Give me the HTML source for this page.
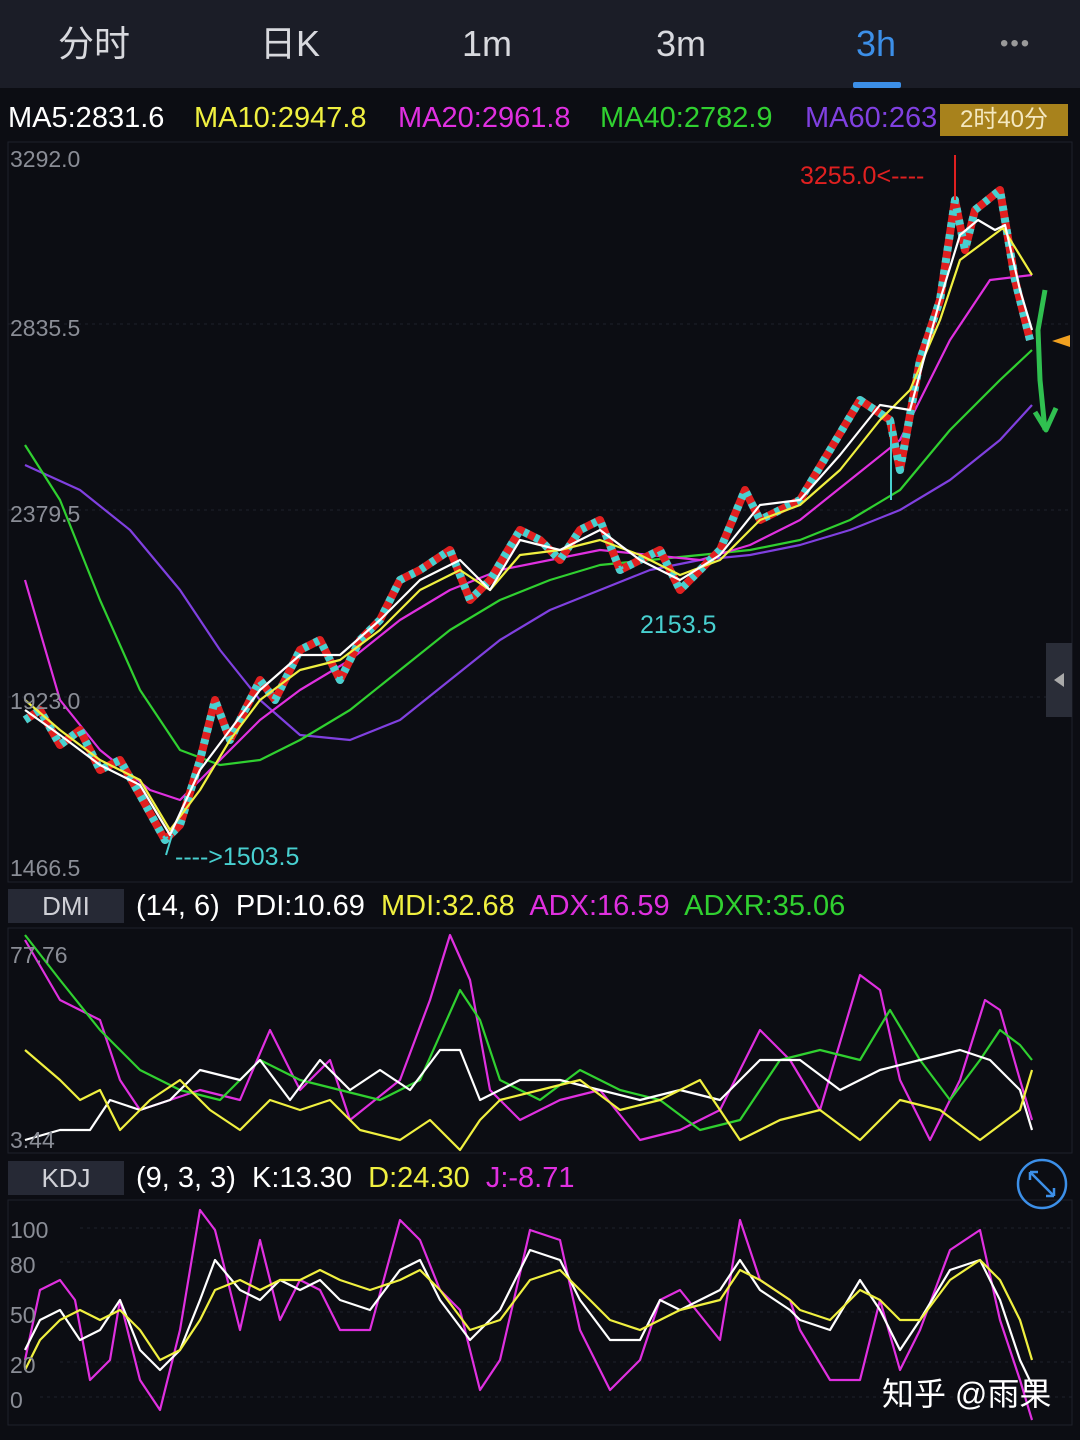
<!DOCTYPE html>
<html><head><meta charset="utf-8"><style>
body{margin:0;width:1080px;height:1440px;background:#0c0d13;overflow:hidden;font-family:"Liberation Sans","Noto Sans CJK SC",sans-serif;position:relative}
.hdr{position:absolute;left:0;top:0;width:1080px;height:88px;background:#1b1d27}
.tab{position:absolute;top:0;height:88px;line-height:88px;font-size:36px;color:#d8d9de}
.t{position:absolute;font-size:29px;white-space:nowrap;line-height:32px}
.box{position:absolute;left:8px;width:116px;height:34px;background:#262935;color:#cfd0d6;font-size:26px;text-align:center;line-height:34px}
</style></head><body>
<div class="hdr"></div>
<div class="tab" style="left:58px">分时</div>
<div class="tab" style="left:260px">日K</div>
<div class="tab" style="left:462px">1m</div>
<div class="tab" style="left:656px">3m</div>
<div class="tab" style="left:856px;color:#3c8fe8">3h</div>
<div class="tab" style="left:1000px;font-size:24px;letter-spacing:2px;color:#999">•••</div>
<div style="position:absolute;left:853px;top:82px;width:48px;height:6px;background:#3c8fe8;border-radius:2px"></div>
<div class="t" style="left:8px;top:102px;color:#fff">MA5:2831.6</div>
<div class="t" style="left:194px;top:102px;color:#f0f040">MA10:2947.8</div>
<div class="t" style="left:398px;top:102px;color:#e030e0">MA20:2961.8</div>
<div class="t" style="left:600px;top:102px;color:#30d030">MA40:2782.9</div>
<div class="t" style="left:805px;top:102px;color:#8040e0">MA60:263</div>
<div style="position:absolute;left:940px;top:104px;width:128px;height:32px;background:#a8821c;color:#f4e8c0;font-size:24px;line-height:32px;text-align:center">2时40分</div>
<svg style="position:absolute;left:0;top:0" width="1080" height="1440">
<g stroke="#1e212b" stroke-width="1" stroke-dasharray="3 4">
<line x1="8" y1="324" x2="1072" y2="324"/><line x1="8" y1="510" x2="1072" y2="510"/><line x1="8" y1="697" x2="1072" y2="697"/>
<line x1="80" y1="1228" x2="1072" y2="1228"/><line x1="60" y1="1262" x2="1072" y2="1262"/><line x1="60" y1="1312" x2="1072" y2="1312"/><line x1="60" y1="1362" x2="1072" y2="1362"/><line x1="40" y1="1397" x2="1072" y2="1397"/>
</g>
<g stroke="#1e212b" fill="none"><rect x="8" y="142" width="1064" height="740"/><rect x="8" y="928" width="1064" height="225"/><rect x="8" y="1200" width="1064" height="225"/></g>
<g fill="none" stroke-width="2.2" stroke-linejoin="round">
<polyline stroke="#8040e0" points="25,465 80,490 130,530 180,590 220,650 260,700 300,735 350,740 400,720 450,680 500,640 550,610 600,590 650,570 700,560 750,555 800,545 850,530 900,510 950,480 1000,440 1032,405"/>
<polyline stroke="#30d030" points="25,445 60,500 100,600 140,690 180,750 220,765 260,760 300,740 350,710 400,670 450,630 500,600 550,580 600,565 650,560 700,555 750,550 800,540 850,520 900,490 950,430 1000,380 1032,350"/>
<polyline stroke="#e030e0" points="25,580 60,700 100,750 150,790 180,800 220,760 260,720 300,690 350,660 400,620 450,590 500,570 550,560 600,550 650,555 700,560 750,545 800,520 850,480 900,440 950,340 990,280 1032,275"/>
<g stroke-width="8">
<polyline stroke="#e02020" points="25,720 40,710 60,745 80,730 100,770 120,760 140,795 165,840 180,825 200,760 215,700 230,740 260,680 275,700 300,650 320,640 340,680 360,640 380,620 400,580 420,570 450,550 470,600 490,580 520,530 540,540 560,560 580,530 600,520 620,570 640,560 660,550 680,590 700,570 720,550 745,490 760,520 800,500 830,450 860,400 890,420 900,470 920,360 940,300 955,200 965,250 975,210 1000,190 1015,280 1030,340"/>
<polyline stroke="#48d0d0" stroke-dasharray="5 7" points="25,720 40,710 60,745 80,730 100,770 120,760 140,795 165,840 180,825 200,760 215,700 230,740 260,680 275,700 300,650 320,640 340,680 360,640 380,620 400,580 420,570 450,550 470,600 490,580 520,530 540,540 560,560 580,530 600,520 620,570 640,560 660,550 680,590 700,570 720,550 745,490 760,520 800,500 830,450 860,400 890,420 900,470 920,360 940,300 955,200 965,250 975,210 1000,190 1015,280 1030,340"/>
</g>
<polyline stroke="#48d0d0" stroke-width="2" points="166,855 172,835"/>
<line x1="891" y1="420" x2="891" y2="500" stroke="#48d0d0" stroke-width="2"/>
<polyline stroke="#f0f040" points="25,700 60,730 100,760 140,780 170,830 200,790 230,740 260,700 300,670 340,660 380,630 420,590 460,570 490,590 520,555 560,550 600,540 640,555 680,575 720,560 760,520 800,505 840,470 880,420 910,390 940,320 960,260 1003,228 1032,275"/>
<polyline stroke="#ffffff" points="25,710 60,735 100,765 140,785 170,835 200,770 230,730 260,690 300,655 340,655 380,620 420,580 460,560 490,590 520,540 560,550 600,530 640,560 680,580 720,555 760,505 800,500 840,455 880,405 910,410 940,300 960,235 978,220 995,230 1005,225 1020,290 1032,330"/>
<polyline stroke="#30c050" stroke-width="5" points="1045,290 1038,330 1040,380 1045,430"/>
<polyline stroke="#30c050" stroke-width="5" points="1035,412 1046,430 1056,408"/>
<polygon fill="#f0a020" points="1052,341 1070,335 1070,347"/>
<line x1="955" y1="155" x2="955" y2="200" stroke="#e02020" stroke-width="2"/>
<polyline stroke="#e030e0" points="25,940 60,1000 80,1010 100,1020 120,1080 140,1110 170,1100 200,1090 240,1100 270,1030 300,1090 330,1060 350,1120 400,1080 430,1000 450,935 470,980 490,1090 520,1120 560,1100 600,1090 640,1140 680,1130 720,1110 760,1030 790,1060 820,1110 860,975 880,990 900,1080 930,1140 960,1080 985,1000 1000,1010 1020,1080 1032,1120"/>
<polyline stroke="#30d030" points="25,935 60,980 100,1030 140,1070 180,1090 220,1100 260,1060 300,1080 340,1090 380,1100 420,1080 460,990 480,1020 500,1080 540,1100 580,1070 620,1090 660,1100 700,1130 740,1120 780,1060 820,1050 860,1060 890,1010 920,1060 950,1100 980,1060 1000,1030 1020,1045 1032,1060"/>
<polyline stroke="#ffffff" points="25,1140 60,1130 90,1130 110,1100 140,1110 170,1100 200,1070 240,1080 260,1060 290,1100 320,1060 350,1090 380,1070 410,1090 440,1050 460,1050 480,1100 520,1080 560,1080 600,1090 640,1100 680,1090 720,1100 760,1060 800,1060 840,1090 880,1070 920,1060 960,1050 990,1060 1020,1090 1032,1130"/>
<polyline stroke="#f0f040" points="25,1050 60,1080 80,1100 100,1090 120,1130 150,1100 180,1080 210,1110 240,1130 270,1100 300,1110 330,1100 360,1130 400,1140 430,1120 460,1150 480,1120 500,1100 540,1090 580,1080 620,1110 660,1100 700,1080 740,1140 780,1120 820,1110 860,1140 900,1100 940,1110 980,1140 1020,1110 1032,1070"/>
<polyline stroke="#e030e0" points="25,1360 40,1290 60,1280 75,1300 90,1380 110,1360 120,1300 140,1380 160,1410 180,1330 200,1210 215,1230 240,1330 260,1240 280,1320 300,1280 320,1290 340,1330 370,1330 400,1220 420,1240 440,1290 460,1310 480,1390 500,1360 530,1230 560,1240 580,1330 610,1390 640,1360 660,1300 680,1290 720,1340 740,1220 760,1280 790,1300 800,1330 830,1380 860,1380 880,1300 900,1370 920,1330 950,1250 980,1230 1000,1320 1020,1380 1032,1420"/>
<polyline stroke="#ffffff" points="25,1350 40,1320 60,1310 80,1340 100,1330 120,1300 140,1350 160,1370 180,1350 200,1300 215,1260 240,1290 260,1300 280,1280 300,1290 320,1280 340,1300 370,1310 400,1270 420,1260 440,1300 470,1340 500,1310 530,1250 560,1260 580,1300 610,1340 640,1340 660,1300 680,1310 720,1290 740,1260 760,1290 790,1310 800,1320 830,1330 860,1280 880,1310 900,1350 920,1320 950,1270 980,1260 1000,1300 1020,1360 1032,1385"/>
<polyline stroke="#f0f040" points="25,1370 40,1340 60,1320 80,1310 100,1320 120,1310 140,1330 160,1360 180,1350 200,1320 215,1290 240,1280 260,1290 280,1280 300,1280 320,1270 340,1280 370,1290 400,1280 420,1270 440,1290 470,1330 500,1320 530,1280 560,1270 580,1290 610,1320 640,1330 660,1320 680,1310 720,1300 740,1270 760,1280 790,1300 800,1310 830,1320 860,1290 880,1300 900,1320 920,1320 950,1280 980,1260 1000,1280 1020,1320 1032,1360"/>
</g>
<circle cx="1042" cy="1184" r="24" fill="none" stroke="#3c8fe8" stroke-width="2.5"/>
<path d="M1030 1172 L1054 1196 M1030 1172 v8 M1030 1172 h8 M1054 1196 v-8 M1054 1196 h-8" stroke="#3c8fe8" stroke-width="2.5" fill="none"/>
<rect x="1046" y="643" width="26" height="74" fill="#2a2d38"/>
<polygon points="1054,680 1064,673 1064,687" fill="#aaa"/>
</svg>
<div class="t" style="left:10px;top:143px;color:#8a8d96;font-size:23px">3292.0</div>
<div class="t" style="left:10px;top:312px;color:#8a8d96;font-size:23px">2835.5</div>
<div class="t" style="left:10px;top:498px;color:#8a8d96;font-size:23px">2379.5</div>
<div class="t" style="left:10px;top:685px;color:#8a8d96;font-size:23px">1923.0</div>
<div class="t" style="left:10px;top:852px;color:#8a8d96;font-size:23px">1466.5</div>
<div class="t" style="left:800px;top:160px;color:#e02020;font-size:25px">3255.0&lt;----</div>
<div class="t" style="left:640px;top:609px;color:#48d0d0;font-size:25px">2153.5</div>
<div class="t" style="left:175px;top:841px;color:#48d0d0;font-size:25px">---->1503.5</div>
<div class="box" style="top:889px">DMI</div>
<div class="t" style="left:136px;top:890px;color:#fff">(14, 6)&nbsp; PDI:10.69&nbsp; <span style="color:#f0f040">MDI:32.68</span>&nbsp; <span style="color:#e030e0">ADX:16.59</span>&nbsp; <span style="color:#30d030">ADXR:35.06</span></div>
<div class="t" style="left:10px;top:939px;color:#8a8d96;font-size:23px">77.76</div>
<div class="t" style="left:10px;top:1124px;color:#8a8d96;font-size:23px">3.44</div>
<div class="box" style="top:1161px">KDJ</div>
<div class="t" style="left:136px;top:1162px;color:#fff">(9, 3, 3)&nbsp; K:13.30&nbsp; <span style="color:#f0f040">D:24.30</span>&nbsp; <span style="color:#e030e0">J:-8.71</span></div>
<div class="t" style="left:10px;top:1214px;color:#8a8d96;font-size:23px">100</div>
<div class="t" style="left:10px;top:1249px;color:#8a8d96;font-size:23px">80</div>
<div class="t" style="left:10px;top:1299px;color:#8a8d96;font-size:23px">50</div>
<div class="t" style="left:10px;top:1349px;color:#8a8d96;font-size:23px">20</div>
<div class="t" style="left:10px;top:1384px;color:#8a8d96;font-size:23px">0</div>
<div class="t" style="left:882px;top:1374px;color:#fff;font-size:32px;line-height:40px">知乎 @雨果</div>
</body></html>
